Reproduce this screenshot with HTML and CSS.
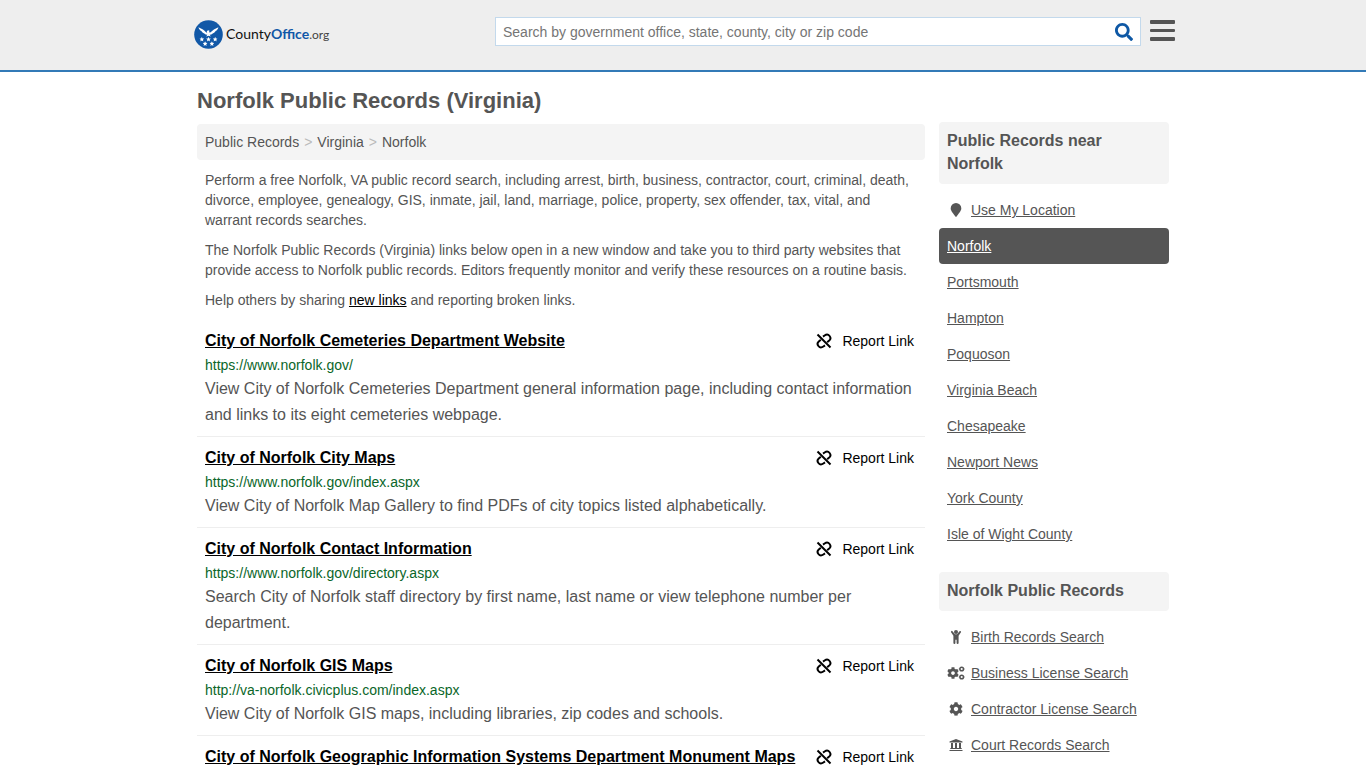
FILE: index.html
```html
<!DOCTYPE html>
<html lang="en">

<head>
    <meta charset="UTF-8">
    <meta name="viewport" content="width=device-width, initial-scale=1.0">
    <title>Norfolk Public Records (Virginia)</title>
    <link rel="stylesheet" href="styles.css">
</head>

<body>
    <!-- Shared icons -->
    <svg class="sprite" aria-hidden="true">
        <symbol id="icon-unlink" viewBox="0 0 16 16">
            <g fill="none" stroke="currentColor" stroke-width="2">
                <path d="M1.500 1.500 14.500 14.500" />
                <path d="M7 3.600 8.600 2.500C10.300 1.300 12.500 1.600 13.600 3c1.200 1.500.9 3.400-.4 4.600L11.200 9.300" />
                <path d="M4.800 6.700 2.800 8.400C1.500 9.600 1.200 11.500 2.400 13c1.100 1.400 3.300 1.700 5 .5L9 12.400" />
            </g>
        </symbol>
        <symbol id="icon-cog" viewBox="0 0 512 512">
            <path fill="currentColor" d="M487.4 315.7l-42.6-24.6c4.3-23.2 4.3-47 0-70.2l42.6-24.6c4.9-2.8 7.1-8.6 5.5-14-11.1-35.6-30-67.8-54.7-94.6-3.8-4.1-10-5.1-14.8-2.3L380.8 110c-17.9-15.4-38.5-27.3-60.8-35.1V25.8c0-5.6-3.9-10.5-9.4-11.7-36.7-8.2-74.3-7.8-109.2 0-5.5 1.2-9.4 6.1-9.4 11.7V75c-22.2 7.9-42.8 19.8-60.8 35.1L88.7 85.5c-4.9-2.8-11-1.9-14.8 2.3-24.7 26.7-43.6 58.9-54.7 94.6-1.7 5.4.6 11.2 5.5 14L67.3 221c-4.3 23.2-4.3 47 0 70.2l-42.6 24.6c-4.9 2.8-7.1 8.6-5.5 14 11.1 35.6 30 67.8 54.7 94.6 3.8 4.1 10 5.1 14.8 2.3l42.6-24.6c17.9 15.4 38.5 27.3 60.8 35.1v49.2c0 5.6 3.9 10.5 9.4 11.7 36.7 8.2 74.3 7.8 109.2 0 5.5-1.2 9.4-6.1 9.4-11.7v-49.2c22.2-7.9 42.8-19.8 60.8-35.1l42.6 24.6c4.9 2.8 11 1.9 14.8-2.3 24.7-26.7 43.6-58.9 54.7-94.6 1.5-5.5-.7-11.3-5.6-14.1zM256 336c-44.1 0-80-35.9-80-80s35.9-80 80-80 80 35.9 80 80-35.9 80-80 80z" />
        </symbol>
        <symbol id="star" viewBox="0 0 10 10">
            <path fill="#fff" d="M5 0 6.4 3.3 10 3.7 7.3 6.1 8.1 9.7 5 7.8 1.9 9.7 2.7 6.1 0 3.7 3.6 3.3z" />
        </symbol>
    </svg>

    <header class="header">
        <div class="header-inner">
            <a class="logo" href="#">
                <svg class="logo-mark" viewBox="0 0 30 30" aria-hidden="true">
                    <circle cx="15" cy="15" r="14.8" fill="#1158a7" />
                    <path fill="#fff" d="M4.600 7.500c2 1.200 4.400 1.900 6 3.400 1.200 1.100 2 2 3 2.400l-.4-1.700 1.300-1 1.600.5-.5 1 .8 1c1-.4 1.800-1.200 2.900-2.200 1.600-1.500 4-2.200 6-3.400-.5 2-1.500 3.200-2.900 4-.7 1.300-1.700 2.100-3 2.500-1 .8-2 1.300-3.200 1.300l1.200 1.700-2.400-.7-2.400.7 1.200-1.700c-1.200 0-2.200-.5-3.200-1.300-1.300-.4-2.300-1.200-3-2.500-1.400-.8-2.500-2-3-4z" />
                    <use href="#star" x="5.600" y="17.400" width="5" height="5" />
                    <use href="#star" x="12.500" y="17.400" width="5" height="5" />
                    <use href="#star" x="19.400" y="17.400" width="5" height="5" />
                    <use href="#star" x="9" y="22" width="5" height="5" />
                    <use href="#star" x="16" y="22" width="5" height="5" />
                </svg>
                <span class="logo-text">County<b>Office</b><small>.org</small></span>
            </a>
            <form class="search">
                <input class="search-input" type="text" aria-label="Search" placeholder="Search by government office, state, county, city or zip code">
                <button class="search-button" type="button" aria-label="Submit search">
                    <svg viewBox="0 0 512 512" width="18" height="18">
                        <path fill="#0e58a5" d="M505 442.700L405.300 343c-4.500-4.500-10.600-7-17-7H372c27.600-35.300 44-79.700 44-128C416 93.100 322.900 0 208 0S0 93.100 0 208s93.100 208 208 208c48.300 0 92.700-16.400 128-44v16.300c0 6.400 2.500 12.500 7 17l99.700 99.700c9.400 9.400 24.600 9.400 33.900 0l28.300-28.300c9.400-9.400 9.400-24.600.1-34zM208 336c-70.700 0-128-57.200-128-128 0-70.700 57.200-128 128-128 70.700 0 128 57.200 128 128 0 70.700-57.200 128-128 128z" />
                    </svg>
                </button>
            </form>
            <button class="menu-button" type="button" aria-label="Menu">
                <svg viewBox="0 0 25 22" width="25" height="22">
                    <path fill="#555" d="M1 0h23a1 1 0 0 1 1 1v2a1 1 0 0 1-1 1H1a1 1 0 0 1-1-1V1a1 1 0 0 1 1-1zM1 9h23a1 1 0 0 1 1 1v1a1 1 0 0 1-1 1H1a1 1 0 0 1-1-1v-1a1 1 0 0 1 1-1zM1 17h23a1 1 0 0 1 1 1v2a1 1 0 0 1-1 1H1a1 1 0 0 1-1-1v-2a1 1 0 0 1 1-1z" />
                </svg>
            </button>
        </div>
    </header>

    <div class="container">
        <main class="main">
            <h1>Norfolk Public Records (Virginia)</h1>
            <nav class="breadcrumb">
                <a href="#">Public Records</a>
                <span>&gt;</span>
                <a href="#">Virginia</a>
                <span>&gt;</span>
                <a href="#">Norfolk</a>
            </nav>
            <div class="intro">
                <p>Perform a free Norfolk, VA public record search, including arrest, birth, business, contractor, court, criminal, death, divorce, employee, genealogy, GIS, inmate, jail, land, marriage, police, property, sex offender, tax, vital, and warrant records searches.</p>
                <p>The Norfolk Public Records (Virginia) links below open in a new window and take you to third party websites that provide access to Norfolk public records. Editors frequently monitor and verify these resources on a routine basis.</p>
                <p>Help others by sharing <a href="#">new links</a> and reporting broken links.</p>
            </div>

            <!-- Record links -->
            <div class="record">
                <div class="record-top">
                    <a class="record-title" href="#">City of Norfolk Cemeteries Department Website</a>
                    <a class="report" href="#"><svg><use href="#icon-unlink" /></svg>Report Link</a>
                </div>
                <div class="record-url">https://www.norfolk.gov/</div>
                <div class="record-text">View City of Norfolk Cemeteries Department general information page, including contact information and links to its eight cemeteries webpage.</div>
            </div>
            <div class="record">
                <div class="record-top">
                    <a class="record-title" href="#">City of Norfolk City Maps</a>
                    <a class="report" href="#"><svg><use href="#icon-unlink" /></svg>Report Link</a>
                </div>
                <div class="record-url">https://www.norfolk.gov/index.aspx</div>
                <div class="record-text">View City of Norfolk Map Gallery to find PDFs of city topics listed alphabetically.</div>
            </div>
            <div class="record">
                <div class="record-top">
                    <a class="record-title" href="#">City of Norfolk Contact Information</a>
                    <a class="report" href="#"><svg><use href="#icon-unlink" /></svg>Report Link</a>
                </div>
                <div class="record-url">https://www.norfolk.gov/directory.aspx</div>
                <div class="record-text">Search City of Norfolk staff directory by first name, last name or view telephone number per department.</div>
            </div>
            <div class="record">
                <div class="record-top">
                    <a class="record-title" href="#">City of Norfolk GIS Maps</a>
                    <a class="report" href="#"><svg><use href="#icon-unlink" /></svg>Report Link</a>
                </div>
                <div class="record-url">http://va-norfolk.civicplus.com/index.aspx</div>
                <div class="record-text">View City of Norfolk GIS maps, including libraries, zip codes and schools.</div>
            </div>
            <div class="record">
                <div class="record-top">
                    <a class="record-title" href="#">City of Norfolk Geographic Information Systems Department Monument Maps</a>
                    <a class="report" href="#"><svg><use href="#icon-unlink" /></svg>Report Link</a>
                </div>
            </div>
        </main>

        <aside class="sidebar">
            <h2>Public Records near Norfolk</h2>
            <ul>
                <li>
                    <svg class="icon" viewBox="0 0 18 14">
                        <path fill="currentColor" d="M8.400 13.600C4.500 8.200 3.700 7.200 3.700 5.200a5.300 5.200 0 0 1 10.600 0c0 2-.8 3-4.700 8.400a.8.8 0 0 1-1.200 0z" />
                    </svg>
                    <a href="#">Use My Location</a>
                </li>
                <li class="active"><a href="#">Norfolk</a></li>
                <li><a href="#">Portsmouth</a></li>
                <li><a href="#">Hampton</a></li>
                <li><a href="#">Poquoson</a></li>
                <li><a href="#">Virginia Beach</a></li>
                <li><a href="#">Chesapeake</a></li>
                <li><a href="#">Newport News</a></li>
                <li><a href="#">York County</a></li>
                <li><a href="#">Isle of Wight County</a></li>
            </ul>

            <h2>Norfolk Public Records</h2>
            <ul>
                <li>
                    <svg class="icon" viewBox="0 0 18 14">
                        <circle cx="9" cy="2.100" r="2" fill="currentColor" />
                        <path fill="currentColor" d="M4.200 1.200a.9.900 0 0 1 1.300 0L8 4.300h2l2.500-3.100a.9.900 0 0 1 1.300 1.300L11.600 5.700V13a.9.900 0 0 1-2 0V9.800H8.400V13a.9.900 0 0 1-2 0V5.700L4.200 2.500a.9.900 0 0 1 0-1.300z" />
                    </svg>
                    <a href="#">Birth Records Search</a>
                </li>
                <li>
                    <svg class="icon" viewBox="0 0 18 14">
                        <use href="#icon-cog" x="0" y="1" width="12" height="12" />
                        <g fill="none" stroke="currentColor" stroke-width="1.500">
                            <circle cx="14.700" cy="3" r="1.800" />
                            <circle cx="14.700" cy="11" r="1.800" />
                        </g>
                        <path stroke="currentColor" stroke-width="1" stroke-dasharray="1 4.600" d="M11.800 3h6M11.800 11h6" />
                    </svg>
                    <a href="#">Business License Search</a>
                </li>
                <li>
                    <svg class="icon" viewBox="0 0 18 14"><use href="#icon-cog" x="2" y="0" width="14" height="14" /></svg>
                    <a href="#">Contractor License Search</a>
                </li>
                <li>
                    <svg class="icon" viewBox="0 0 18 14">
                        <path fill="currentColor" d="M9 1 15.500 3.500V4.500H2.500V3.500zM4 5h2v5H4zM8 5h2v5H8zM12 5h2v5h-2zM3.300 10h11.400v1H3.300zM2.500 12h13v1h-13z" />
                    </svg>
                    <a href="#">Court Records Search</a>
                </li>
            </ul>
        </aside>
    </div>
</body>

</html>
```
FILE: styles.css
```css
* {
    box-sizing: border-box;
}

body {
    margin: 0;
    background: #fff;
    color: #555;
    font-family: "Liberation Sans", Arial, sans-serif;
    font-size: 14px;
    line-height: 20px;
}

a {
    color: #555;
}

.sprite {
    position: absolute;
    width: 0;
    height: 0;
}

/* Header */
.header {
    background: #eee;
    border-bottom: 2px solid #337ab7;
}

.header-inner {
    display: flex;
    align-items: flex-start;
    max-width: 984px;
    height: 70px;
    margin: 0 auto;
    padding: 17px 0 0 3px;
}

.logo {
    display: flex;
    align-items: center;
    gap: 3px;
    width: 301px;
    margin-top: 3px;
    color: #111;
    text-decoration: none;
}

.logo-mark {
    width: 29px;
    height: 29px;
}

.logo-text {
    font-family: Lato, sans-serif;
    font-size: 14px;
}

.logo-text b {
    color: #1158a7;
}

.logo-text small {
    color: #444;
    font-size: 12px;
}

.search {
    display: flex;
    flex: 1;
    height: 29px;
    background: #fff;
    border: 1px solid #c3d9ec;
}

.search-input {
    flex: 1;
    min-width: 0;
    padding: 0 7px;
    border: 0;
    background: none;
    font-family: inherit;
    font-size: 14px;
}

.search-input::placeholder {
    color: #757575;
}

.search-button,
.menu-button {
    display: flex;
    align-items: center;
    padding: 0;
    border: 0;
    background: none;
    cursor: pointer;
}

.search-button {
    padding: 0 7px;
}

.menu-button {
    margin: 3px 0 0 9px;
}

/* Page columns */
.container {
    display: flex;
    gap: 14px;
    max-width: 972px;
    margin: 0 auto;
}

.main {
    flex: 1;
    min-width: 0;
}

h1 {
    margin: 0;
    padding: 17px 0 11px;
    font-size: 22px;
    line-height: 24px;
}

.breadcrumb {
    display: flex;
    gap: 5px;
    padding: 8px;
    background: #f4f4f4;
    border-radius: 4px;
}

.breadcrumb a {
    text-decoration: none;
}

.breadcrumb span {
    color: #bbb;
}

.intro {
    padding: 0 8px;
}

.intro p {
    margin: 10px 0;
}

.intro a {
    color: #000;
}

/* Records */
.record {
    padding: 9px 8px 8px;
    border-bottom: 1px solid #eee;
}

.record-top {
    display: flex;
    justify-content: space-between;
    margin-bottom: 2px;
    line-height: 24px;
}

.record-title {
    color: #000;
    font-size: 16px;
    font-weight: bold;
}

.report {
    display: flex;
    align-items: center;
    gap: 10px;
    padding-right: 3px;
    color: #000;
    text-decoration: none;
}

.report svg {
    width: 16px;
    height: 16px;
}

.record-url {
    margin-bottom: 1px;
    color: #0a6629;
}

.record-text {
    font-size: 16px;
    line-height: 26px;
}

/* Sidebar */
.sidebar {
    width: 230px;
    padding-top: 50px;
}

.sidebar h2 {
    margin: 0;
    padding: 7px 8px 9px;
    background: #f4f4f4;
    border-radius: 4px;
    font-size: 16px;
    line-height: 23px;
}

.sidebar ul {
    margin: 8px 0 20px;
    padding: 0;
    list-style: none;
}

.sidebar li {
    display: flex;
    align-items: center;
    gap: 6px;
    padding: 8px;
    border-radius: 4px;
}

.sidebar .active {
    background: #555;
}

.active a {
    color: #fff;
}

.icon {
    width: 18px;
    height: 14px;
}
```
